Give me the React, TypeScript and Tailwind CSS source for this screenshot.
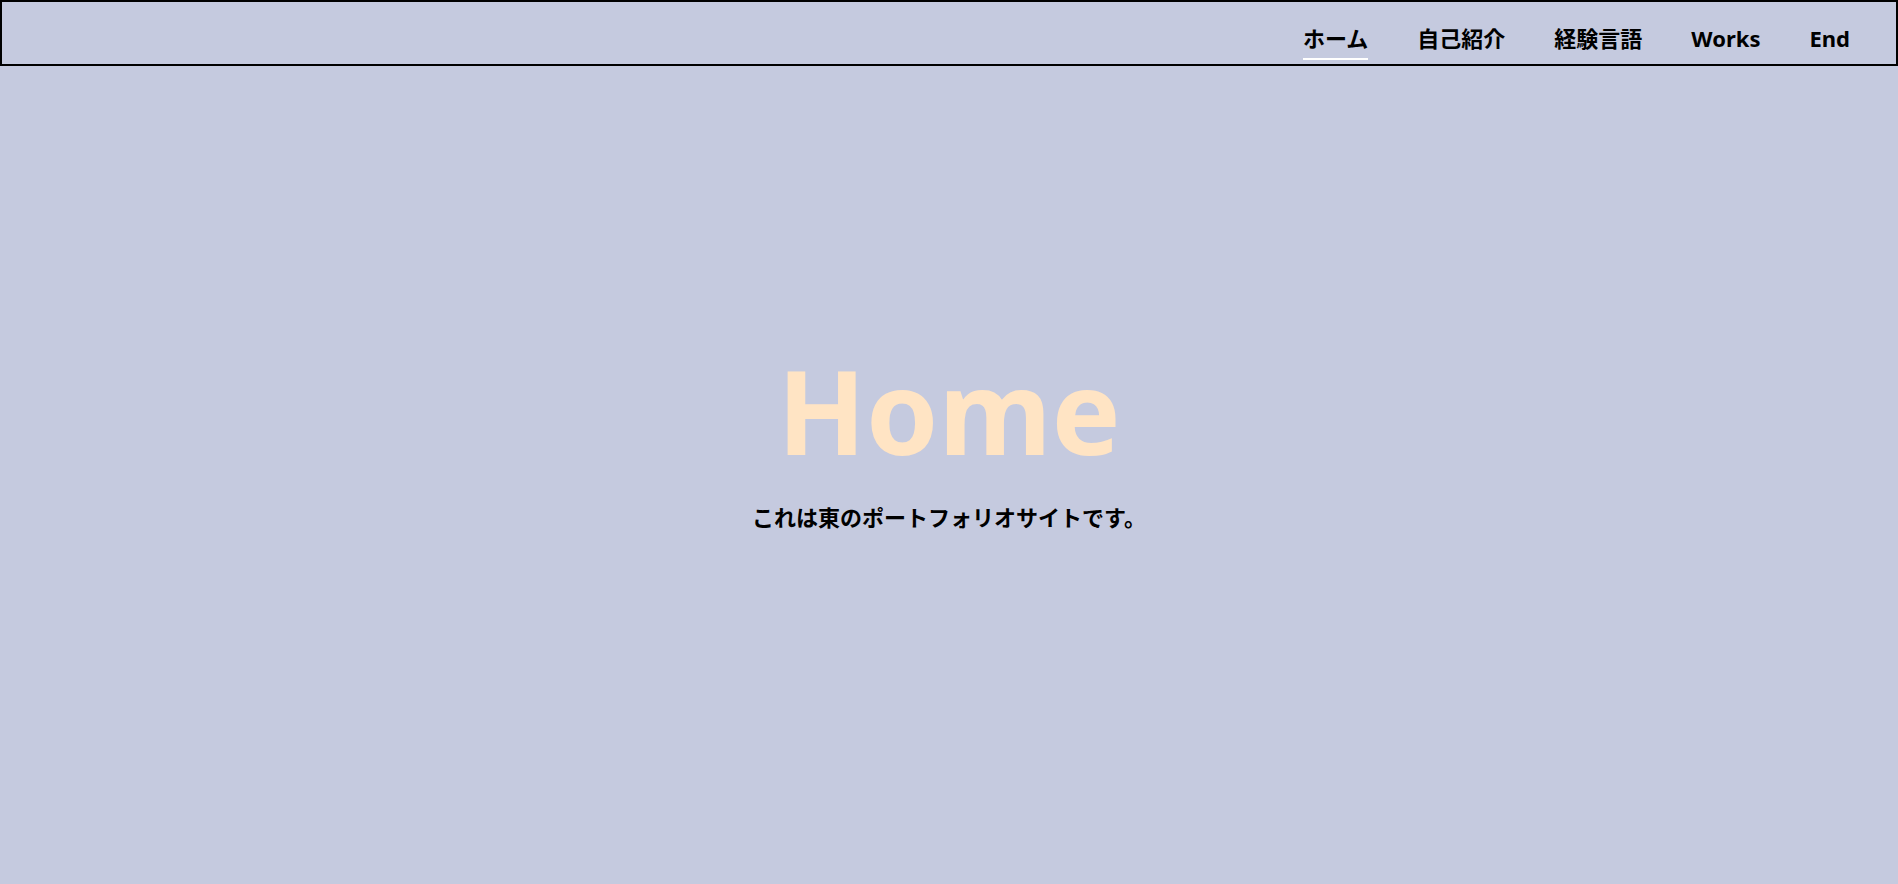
const navItems = ['ホーム', '自己紹介', '経験言語', 'Works', 'End'];

export default function App() {
  return (
    <div
      className="min-h-screen bg-[#c5cadf] text-black"
      style={{ fontFamily: '"Noto Sans", "Noto Sans CJK JP", sans-serif' }}
    >
      <header className="h-[66px] border-2 border-black flex items-end justify-end pb-[4px] pr-[46px]">
        <nav className="flex items-end gap-[49px]">
          {navItems.map((item, i) => (
            <a
              key={item}
              href="#"
              className={
                'block text-[22px] font-bold leading-none pb-[9px] border-b-2 ' +
                (i === 0 ? 'border-white' : 'border-transparent')
              }
            >
              {item}
            </a>
          ))}
        </nav>
      </header>

      <main className="flex flex-col items-center pt-[286px]">
        <h1 className="text-[116px] font-bold leading-none text-[#ffe4c4]">Home</h1>
        <p className="mt-[38px] text-[22px] font-bold leading-none">
          これは東のポートフォリオサイトです。
        </p>
      </main>
    </div>
  );
}
